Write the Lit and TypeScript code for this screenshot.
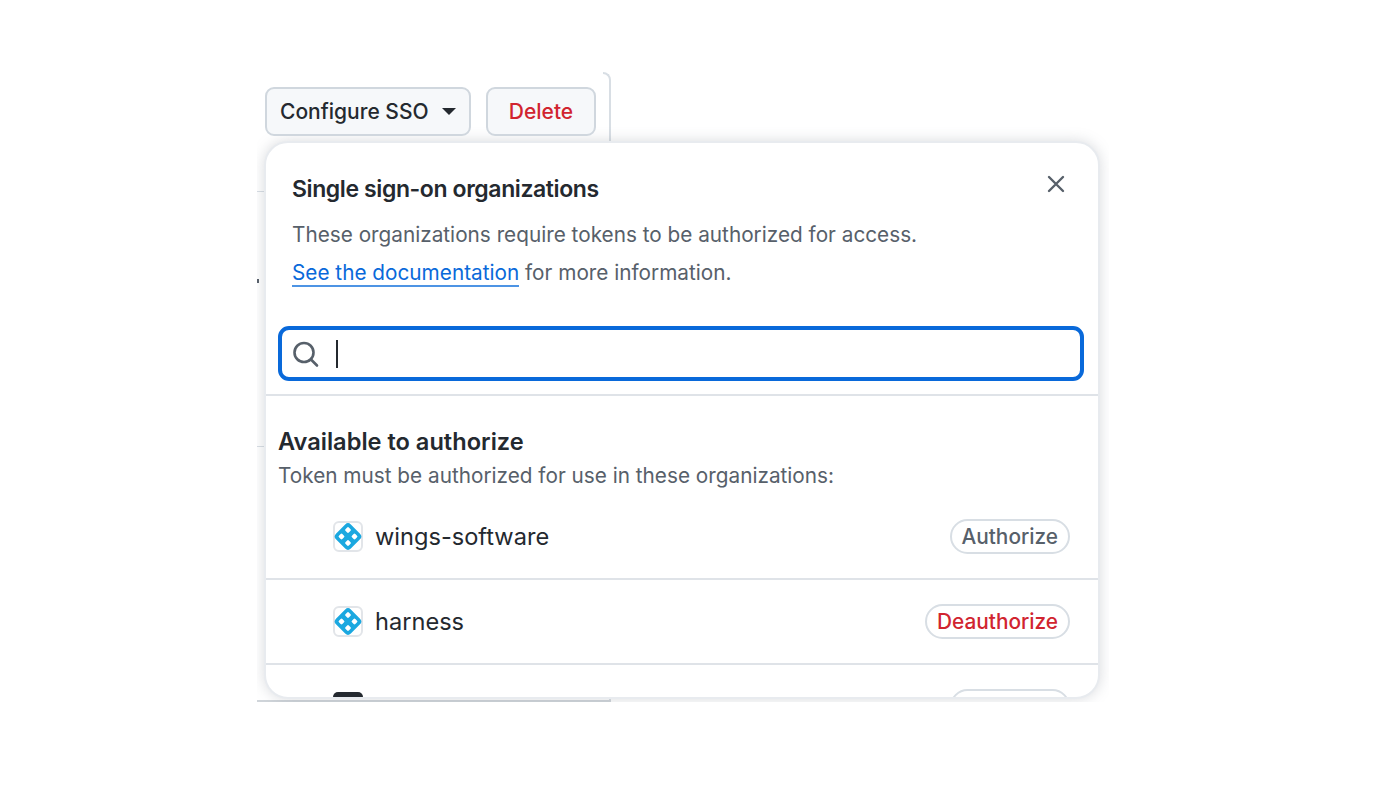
import { LitElement, html, css } from "lit";
import { customElement } from "lit/decorators.js";

const logo = html`<svg class="logo" width="30" height="31" viewBox="0 0 30 31">
  <rect x="1" y="1" width="28" height="29" rx="5" fill="#fff" stroke="#e2e5e9" stroke-width="2"/>
  <rect x="4.500" y="5" width="21" height="21" rx="4" fill="#1ba8e0" transform="rotate(45 15 15.500)"/>
  <g fill="#fff">
    <rect x="12.600" y="6.600" width="4.800" height="4.800" rx="1.200" transform="rotate(45 15 9)"/>
    <rect x="12.600" y="19.600" width="4.800" height="4.800" rx="1.200" transform="rotate(45 15 22)"/>
    <rect x="6.100" y="13.100" width="4.800" height="4.800" rx="1.200" transform="rotate(45 8.500 15.500)"/>
    <rect x="19.100" y="13.100" width="4.800" height="4.800" rx="1.200" transform="rotate(45 21.500 15.500)"/>
  </g></svg>`;

@customElement("app-root")
export class AppRoot extends LitElement {
  static styles = css`
    :host { display: block; height: 800px; background: #fff; font-family: Inter, "Liberation Sans", sans-serif; color: #24292f; overflow: hidden; }
    .stage { position: relative; width: 1376px; height: 800px; }
    .clip { position: absolute; left: 257px; top: 72px; width: 852px; height: 630px; overflow: hidden; }
    .frame { position: absolute; left: 352px; top: 8px; width: 2px; height: 622px; background: #d8dee4; }
    .corner { position: absolute; left: 346px; top: 0; width: 8px; height: 8px; box-sizing: border-box; border-top: 2px solid #d8dee4; border-right: 2px solid #d8dee4; border-top-right-radius: 8px; }
    .rule { position: absolute; left: 0; width: 8px; height: 1px; background: #d8dee4; }
    .bottom { position: absolute; left: 0; top: 628px; width: 354px; height: 2px; background: #d0d5da; }
    .mark { position: absolute; left: 0; top: 207px; width: 2px; height: 4px; background: #57606a; }
    .actions { position: absolute; left: 265px; top: 87px; display: flex; gap: 15px; }
    .btn { box-sizing: border-box; height: 49px; border: 2px solid #d0d7de; border-radius: 9px; background: #f6f8fa; display: flex; align-items: center; font-size: 21px; font-weight: 500; }
    .sso { width: 206px; padding-left: 13px; gap: 13px; }
    .caret { width: 0; height: 0; border-left: 7px solid transparent; border-right: 7px solid transparent; border-top: 7px solid #24292f; }
    .delete { width: 110px; justify-content: center; color: #d1242f; }
    .card { position: absolute; left: 7px; top: 69px; width: 836px; height: 558px; box-sizing: border-box; background: #fff; border: 2px solid #e8ebef; border-radius: 24px; overflow: hidden; box-shadow: 0 0 14px rgba(120,125,135,.28); }
    header { padding: 29px 26px 0; position: relative; }
    h2 { margin: 0; font-size: 23px; letter-spacing: -.4px; line-height: 34px; font-weight: 600; }
    p { margin: 0; }
    .desc { font-size: 20.750px; line-height: 38px; color: #57606a; }
    .desc.first { margin-top: 10px; }
    a { color: #0969da; text-decoration: none; border-bottom: 2px solid #4d94e4; }
    .close { position: absolute; right: 32px; top: 31px; }
    .search { margin: 34px 14px 13px 12px; height: 55px; box-sizing: border-box; border: 4px solid #0969da; border-radius: 11px; display: flex; align-items: center; padding-left: 10px; gap: 16px; }
    .cursor { width: 2px; height: 28px; background: #24292f; }
    section { border-top: 2px solid #dfe3e8; padding: 29px 12px 0; }
    h3 { margin: 0; font-size: 23.600px; line-height: 34px; font-weight: 600; }
    .sub { font-size: 20.750px; line-height: 34px; color: #57606a; }
    .list { margin-top: 2px; }
    .row { height: 85px; box-sizing: border-box; display: flex; align-items: center; padding: 0 28px 0 67px; margin: 0 -12px; border-bottom: 2px solid #dfe3e8; gap: 12px; font-size: 23.600px; }
    .name { flex: 1; }
    .pill { box-sizing: border-box; height: 35px; padding: 0 10px; border: 2px solid #d8dee4; border-radius: 18px; display: flex; align-items: center; font-size: 20.800px; font-weight: 500; color: #57606a; background: #fff; }
    .pill.red { color: #d1242f; }
    .dark { width: 30px; height: 30px; border-radius: 5px; background: #24292f; }
  `;
  render() {
    return html`<div class="stage">
      <div class="clip">
        <div class="corner"></div>
        <div class="frame"></div>
        <div class="rule" style="top:119px"></div>
        <div class="rule" style="top:374px"></div>
        <div class="mark"></div>
        <div class="bottom"></div>
        <div class="card">
          <header>
            <h2>Single sign-on organizations</h2>
            <p class="desc first">These organizations require tokens to be authorized for access.</p>
            <p class="desc"><a>See the documentation</a> for more information.</p>
            <svg class="close" width="20" height="20" viewBox="0 0 20 20" fill="none" stroke="#57606a" stroke-width="2.400" stroke-linecap="round"><path d="M3 3l14 14M17 3 3 17"/></svg>
          </header>
          <div class="search">
            <svg width="28" height="28" viewBox="0 0 28 28" fill="none" stroke="#57606a" stroke-width="2.600" stroke-linecap="round"><circle cx="12" cy="12.500" r="9.500"/><path d="m19 19.500 6 6"/></svg>
            <span class="cursor"></span>
          </div>
          <section>
            <h3>Available to authorize</h3>
            <p class="sub">Token must be authorized for use in these organizations:</p>
            <div class="list">
              <div class="row">${logo}<span class="name">wings-software</span><span class="pill">Authorize</span></div>
              <div class="row">${logo}<span class="name">harness</span><span class="pill red">Deauthorize</span></div>
              <div class="row"><span class="dark"></span><span class="name"></span><span class="pill">Authorize</span></div>
            </div>
          </section>
        </div>
      </div>
      <div class="actions">
        <div class="btn sso">Configure SSO <span class="caret"></span></div>
        <div class="btn delete">Delete</div>
      </div>
    </div>`;
  }
}
